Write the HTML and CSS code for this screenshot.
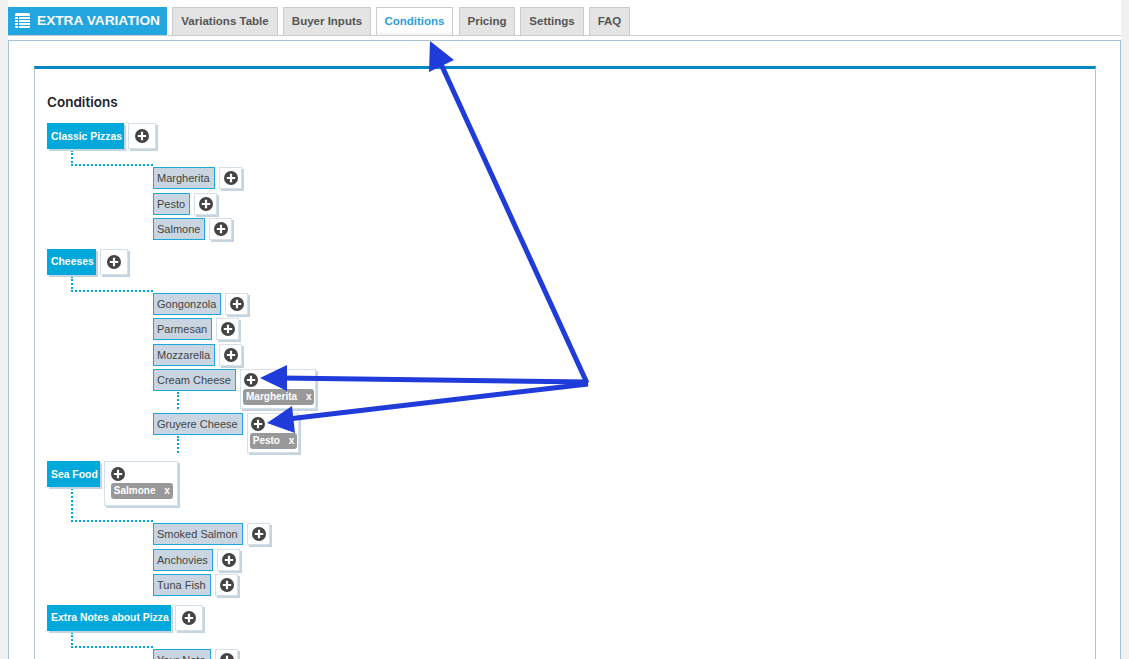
FILE: index.html
```html
<!DOCTYPE html>
<html lang="en">
<head>
  <meta charset="UTF-8">
  <title>Extra Variation - Conditions</title>
  <meta name="viewport" content="width=device-width, initial-scale=1.0">
  <link rel="stylesheet" href="styles.css">
</head>
<body>

  <svg class="defs" width="0" height="0">
    <symbol id="plus" viewBox="0 0 14 14">
      <circle cx="7" cy="7" r="7" fill="#444"/>
      <path d="M7 2.8v8.4M2.8 7h8.4" stroke="#fff" stroke-width="2.2"/>
    </symbol>
  </svg>

  <div class="wrap">
    <div class="tabs">
      <div class="brand">
        <svg class="brand-icon" width="15" height="15" viewBox="0 0 15 15">
          <rect width="15" height="15" rx="1.5" fill="#fff"/>
          <path d="M0 3.5h15M0 6.5h15M0 9.5h15M0 12.5h15M3.5 3v12" stroke="#23a6e0" stroke-width="1"/>
        </svg>
        EXTRA VARIATION
      </div>
      <a class="tab tab-1">Variations Table</a>
      <a class="tab tab-2">Buyer Inputs</a>
      <a class="tab active tab-3">Conditions</a>
      <a class="tab tab-4">Pricing</a>
      <a class="tab tab-5">Settings</a>
      <a class="tab tab-6">FAQ</a>
    </div>

    <div class="panel">
      <div class="box">
        <h3>Conditions</h3>

        <div class="group">
          <div class="row root-row">
            <span class="root">Classic Pizzas</span>
            <span class="add"><svg class="plus"><use href="#plus"/></svg></span>
          </div>
          <div class="branch"></div>
          <div class="children">
            <div class="row"><span class="child">Margherita</span><span class="add"><svg class="plus"><use href="#plus"/></svg></span></div>
            <div class="row"><span class="child">Pesto</span><span class="add"><svg class="plus"><use href="#plus"/></svg></span></div>
            <div class="row"><span class="child">Salmone</span><span class="add"><svg class="plus"><use href="#plus"/></svg></span></div>
          </div>
        </div>

        <div class="group">
          <div class="row root-row">
            <span class="root">Cheeses</span>
            <span class="add"><svg class="plus"><use href="#plus"/></svg></span>
          </div>
          <div class="branch"></div>
          <div class="children">
            <div class="row"><span class="child">Gongonzola</span><span class="add"><svg class="plus"><use href="#plus"/></svg></span></div>
            <div class="row"><span class="child">Parmesan</span><span class="add"><svg class="plus"><use href="#plus"/></svg></span></div>
            <div class="row"><span class="child">Mozzarella</span><span class="add"><svg class="plus"><use href="#plus"/></svg></span></div>
            <div class="row">
              <div class="stem"><span class="child">Cream Cheese</span></div>
              <span class="add wide"><svg class="plus"><use href="#plus"/></svg><span class="tag">Margherita <i>x</i></span></span>
            </div>
            <div class="row">
              <div class="stem"><span class="child">Gruyere Cheese</span></div>
              <span class="add wide"><svg class="plus"><use href="#plus"/></svg><span class="tag">Pesto <i>x</i></span></span>
            </div>
          </div>
        </div>

        <div class="group">
          <div class="row root-row">
            <span class="root">Sea Food</span>
            <span class="add wide"><svg class="plus"><use href="#plus"/></svg><span class="tag">Salmone <i>x</i></span></span>
          </div>
          <div class="branch branch-long"></div>
          <div class="children">
            <div class="row"><span class="child">Smoked Salmon</span><span class="add"><svg class="plus"><use href="#plus"/></svg></span></div>
            <div class="row"><span class="child">Anchovies</span><span class="add"><svg class="plus"><use href="#plus"/></svg></span></div>
            <div class="row"><span class="child">Tuna Fish</span><span class="add"><svg class="plus"><use href="#plus"/></svg></span></div>
          </div>
        </div>

        <div class="group">
          <div class="row root-row">
            <span class="root">Extra Notes about Pizza</span>
            <span class="add"><svg class="plus"><use href="#plus"/></svg></span>
          </div>
          <div class="branch"></div>
          <div class="children">
            <div class="row"><span class="child">Your Note</span><span class="add"><svg class="plus"><use href="#plus"/></svg></span></div>
          </div>
        </div>
      </div>
    </div>
  </div>

  <!-- annotation arrows drawn over the screenshot -->
  <svg class="arrows" width="1129" height="659" viewBox="0 0 1129 659">
    <g fill="none" stroke="#1f3bd9" stroke-width="5">
      <path d="M587 383L441 64"/>
      <path d="M588 382L282 378"/>
      <path d="M588 384L288 419"/>
    </g>
    <g fill="#1f3bd9">
      <path d="M430 41L454 60L429 72Z"/>
      <path d="M260 378L287 365L287 391Z"/>
      <path d="M267 423L292 406L295 433Z"/>
    </g>
  </svg>

</body>
</html>
```

FILE: styles.css
```css
html, body {
  height: 100%;
}

body {
  background: #f1f1f1;
  color: #444;
  font-family: "Liberation Sans", Arial, sans-serif;
  font-size: 11px;
  margin: 0;
  padding: 0 8px;
  overflow: hidden;
  position: relative;
}

.defs {
  position: absolute;
}

.wrap {
  background: #fff;
  height: 100%;
  padding-top: 7px;
  box-sizing: border-box;
}

/* tabs */
.tabs {
  display: flex;
  height: 28px;
  border-bottom: 1px solid #ccc;
}

.brand {
  display: flex;
  align-items: center;
  width: 159px;
  box-sizing: border-box;
  padding: 0 0 2px 7px;
  background: #23a6e0;
  color: #fff;
  font-size: 13.7px;
  font-weight: bold;
  white-space: nowrap;
}

.brand-icon {
  margin-right: 7px;
}

.tab {
  display: flex;
  align-items: center;
  justify-content: center;
  margin-left: 5px;
  padding-bottom: 2px;
  background: #e4e4e4;
  border: 1px solid #ccc;
  border-bottom: none;
  box-sizing: border-box;
  color: #555;
  font-size: 11.5px;
  font-weight: bold;
  white-space: nowrap;
}

.tab-1 { width: 106px; }
.tab-2 { width: 88px; }
.tab-3 { width: 77px; }
.tab-4 { width: 56px; margin-left: 6px; }
.tab-5 { width: 64px; }
.tab-6 { width: 41px; }

.tab.active {
  background: linear-gradient(#fff 85%, #f3f3f3);
  color: #2a9fdc;
}

/* panel */
.panel {
  margin-top: 4px;
  height: 700px;
  border: 1px solid #a9c1d5;
  padding: 25px 24px 0 25px;
}

.box {
  height: 100%;
  border-top: 3px solid #0088c6;
  border-left: 1px solid #b0c4d4;
  border-right: 1px solid #b0c4d4;
  padding-left: 12px;
}

h3 {
  margin: 0;
  padding-top: 26px;
  height: 28px;
  line-height: 15px;
  font-family: Inter, "Liberation Sans", sans-serif;
  font-size: 13.5px;
  font-weight: 600;
  color: #222;
}

/* tree */
.group {
  margin-bottom: 8.5px;
}

.row {
  display: flex;
  align-items: flex-start;
  margin-bottom: 3.5px;
}

.root-row {
  margin-bottom: 0;
}

.root {
  display: flex;
  align-items: center;
  height: 26px;
  padding: 0 2px 0 4px;
  background: #00a8dc;
  color: #fff;
  font-size: 10.4px;
  font-weight: bold;
  box-shadow: 2px 2px 0 #c6d4e0;
  white-space: nowrap;
}

.child {
  display: flex;
  align-items: center;
  height: 20px;
  padding: 0 4px 0 3px;
  background: #c9d6e2;
  border: 1px solid #1aa9dd;
  color: #444;
  white-space: nowrap;
}

.add {
  display: flex;
  flex-direction: column;
  align-items: flex-start;
  justify-content: center;
  margin-left: 4px;
  padding: 0 3px 0 4px;
  min-height: 20px;
  background: #fff;
  border: 1px solid #d5e0e8;
  box-shadow: 2px 2px 0 #c6d4e0;
}

.root-row > .add {
  min-height: 24px;
  padding: 0 6px;
}

.plus {
  display: block;
  width: 14px;
  height: 14px;
}

.add.wide {
  padding: 3px 1px 3px 2px;
}

.add.wide .plus {
  margin-left: 1px;
}

.root-row > .add.wide {
  padding: 5px 4px 6px 6px;
}

.root-row > .add.wide .plus {
  margin-left: 0;
}

.tag {
  margin-top: 2px;
  padding: 0 3px;
  height: 16px;
  line-height: 16px;
  background: #999;
  border-radius: 3px;
  color: #fff;
  font-size: 10px;
  font-weight: bold;
  white-space: nowrap;
}

.tag i {
  font-style: normal;
  margin-left: 6px;
}

.branch {
  width: 82px;
  height: 16px;
  margin: 1px 0 1px 24px;
  border-left: 2px dotted #00a8dc;
  border-bottom: 2px dotted #00a8dc;
  box-sizing: border-box;
}

.branch-long {
  margin-top: -18px;
  height: 34px;
}

.children {
  margin-left: 106px;
}

.stem {
  display: flex;
  flex-direction: column;
  align-self: stretch;
}

.stem::after {
  content: "";
  flex: 1;
  margin: 1px 0 0 24px;
  border-left: 2px dotted #00a8dc;
}

/* annotation overlay */
.arrows {
  position: absolute;
  left: 0;
  top: 0;
  pointer-events: none;
}
```
